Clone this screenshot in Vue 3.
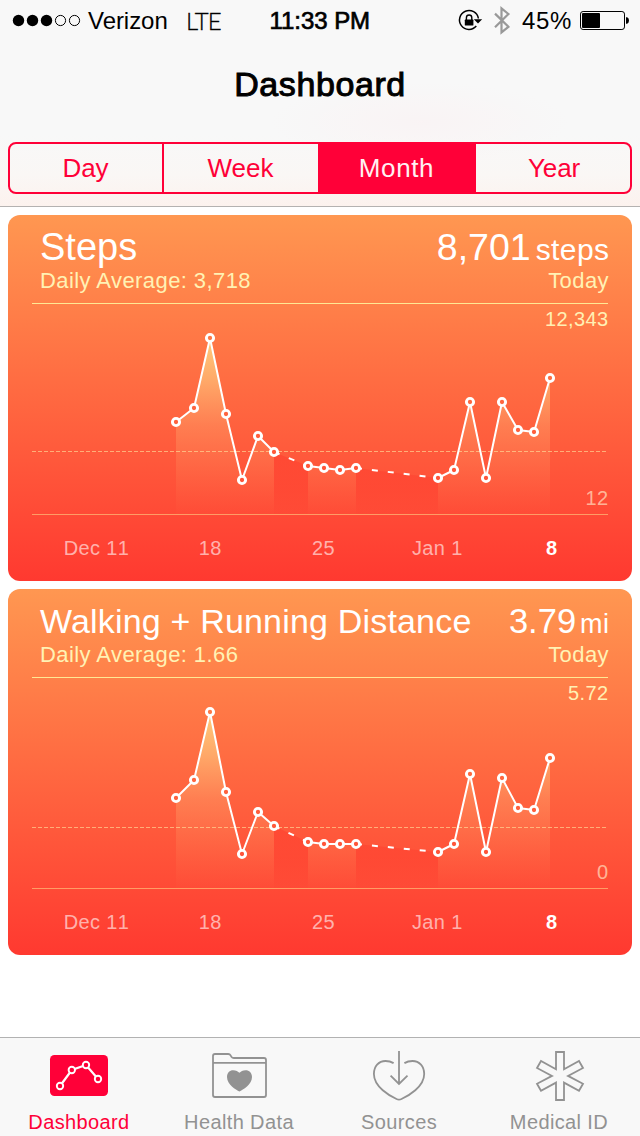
<script setup>
const xs = [176, 194, 210, 226, 242, 258, 274, 308, 324, 340, 356, 438, 454, 470, 486, 502, 518, 534, 550]
const runs = [[0, 6], [7, 10], [11, 18]]
const baseY = 514

function build(card) {
  const pts = card.ys.map((y, i) => ({ x: xs[i], y }))
  const seg = (a, b) => pts.slice(a, b + 1).map((p) => `${p.x},${p.y}`).join(' ')
  const area = (a, b) => `${pts[a].x},${baseY} ${seg(a, b)} ${pts[b].x},${baseY}`
  return {
    ...card,
    pts,
    lines: runs.map(([a, b]) => seg(a, b)),
    areas: runs.map(([a, b]) => area(a, b)),
    gapLines: [seg(6, 7), seg(10, 11)],
    gapAreas: [area(6, 7), area(10, 11)],
  }
}

const cards = [
  build({
    id: 'steps', title: 'Steps', value: '8,701', unit: 'steps', average: '3,718',
    max: '12,343', min: '12', averageY: 451.5,
    ys: [422, 408, 338, 414, 480, 436, 452, 466, 468, 470, 468, 478, 470, 402, 478, 402, 430, 432, 378],
  }),
  build({
    id: 'distance', title: 'Walking + Running Distance', value: '3.79', unit: 'mi', average: '1.66',
    max: '5.72', min: '0', averageY: 453.5,
    ys: [424, 406, 338, 418, 480, 438, 452, 468, 470, 470, 470, 478, 470, 400, 478, 404, 434, 436, 384],
  }),
]

const ticks = [
  { x: 96.5, label: 'Dec 11' },
  { x: 210.3, label: '18' },
  { x: 323.6, label: '25' },
  { x: 437.3, label: 'Jan 1' },
  { x: 551.7, label: '8', current: true },
]
const ranges = ['Day', 'Week', 'Month', 'Year']
</script>

<template>
  <div class="screen">
    <header class="top">
      <div class="status">
        <svg class="signal" width="88" height="40" viewBox="0 0 88 40">
          <circle v-for="n in 3" :key="n" :cx="4.5 + n * 14" cy="20.5" r="5.7" />
          <circle v-for="n in 2" :key="'o' + n" :cx="46.5 + n * 14" cy="20.5" r="5.1" fill="none" stroke="#000" stroke-width="1" />
        </svg>
        <span class="carrier">Verizon</span>
        <span class="network">LTE</span>
        <span class="clock">11:33 PM</span>
        <svg width="70" height="40" viewBox="452 0 70 40">
          <path d="M478.4 18.5A9.5 9.5 0 1 0 476.3 26.1" fill="none" stroke="#000" stroke-width="1.5" />
          <path d="M473.8 19.2h8.4l-4.2 4.4z" />
          <rect x="464.8" y="19.6" width="8.6" height="6" rx=".6" />
          <path d="M466.4 20v-2.3a2.7 2.7 0 0 1 5.4 0V20" fill="none" stroke="#000" stroke-width="1.4" />
          <path d="M495 13.6l13.4 13.2-6.9 5.6V8.4l6.9 5.6-13.4 13.2" fill="none" stroke="#999" stroke-width="2.2" />
        </svg>
        <span class="percent">45%</span>
        <svg width="62" height="40" viewBox="578 0 62 40">
          <rect x="580.5" y="11.5" width="44" height="18" rx="2.6" fill="none" stroke="#000" stroke-width="1" />
          <rect x="582" y="13" width="18" height="15" rx="1" />
          <path d="M626 17.3h1.2q1.8 1 1.8 3.2t-1.8 3.2H626z" />
        </svg>
      </div>
      <h1 class="title">Dashboard</h1>
      <nav class="segments">
        <button v-for="r in ranges" :key="r" class="segment" :class="[r.toLowerCase(), { active: r === 'Month' }]">{{ r }}</button>
      </nav>
    </header>

    <main class="cards">
      <section v-for="c in cards" :key="c.id" class="card" :class="c.id">
        <div class="card-head">
          <div class="row primary">
            <span class="name">{{ c.title }}</span>
            <span class="reading"><span class="value">{{ c.value }}</span><span class="unit">{{ c.unit }}</span></span>
          </div>
          <div class="row secondary">
            <span>Daily Average: {{ c.average }}</span>
            <span>Today</span>
          </div>
        </div>
        <svg class="chart" width="624" height="278" viewBox="8 303 624 278">
          <defs>
            <linearGradient :id="c.id + '-area'" gradientUnits="userSpaceOnUse" x1="0" y1="338" x2="0" y2="514">
              <stop offset="0" stop-color="#ffe08a" stop-opacity=".8" />
              <stop offset=".25" stop-color="#ffd283" stop-opacity=".58" />
              <stop offset=".5" stop-color="#ffb878" stop-opacity=".33" />
              <stop offset="1" stop-color="#ff9a60" stop-opacity=".02" />
            </linearGradient>
            <linearGradient :id="c.id + '-gap'" gradientUnits="userSpaceOnUse" x1="0" y1="450" x2="0" y2="514">
              <stop offset="0" stop-color="#ff3228" stop-opacity=".42" />
              <stop offset=".6" stop-color="#ff3228" stop-opacity=".25" />
              <stop offset="1" stop-color="#ff3228" stop-opacity="0" />
            </linearGradient>
            <linearGradient :id="c.id + '-dot'" gradientUnits="userSpaceOnUse" x1="0" y1="215" x2="0" y2="581">
              <stop offset="0" stop-color="#ff9751" />
              <stop offset="1" stop-color="#ff3930" />
            </linearGradient>
          </defs>
          <rect x="32" y="303" width="576" height="1" fill="#ffe894" />
          <polygon v-for="(p, i) in c.areas" :key="'a' + i" :points="p" :fill="`url(#${c.id}-area)`" />
          <polygon v-for="(p, i) in c.gapAreas" :key="'g' + i" :points="p" :fill="`url(#${c.id}-gap)`" />
          <line x1="32" x2="606" :y1="c.averageY" :y2="c.averageY" stroke="#ffe6a0" stroke-opacity=".6" stroke-dasharray="4 2" />
          <rect x="32" y="514" width="576" height="1" fill="#ffe08c" fill-opacity=".55" />
          <polyline v-for="(p, i) in c.gapLines" :key="'d' + i" :points="p" class="line dashed" />
          <polyline v-for="(p, i) in c.lines" :key="'l' + i" :points="p" class="line" />
          <circle v-for="p in c.pts" :key="p.x" :cx="p.x" :cy="p.y" r="3.6" :fill="`url(#${c.id}-dot)`" stroke="#fff" stroke-width="2.9" />
          <text x="608.4" y="326" class="bound max">{{ c.max }}</text>
          <text x="608.4" y="505" class="bound min">{{ c.min }}</text>
          <text v-for="t in ticks" :key="t.label" :x="t.x" y="555" class="tick" :class="{ current: t.current }">{{ t.label }}</text>
        </svg>
      </section>
    </main>

    <footer class="tabs">
      <a class="tab active">
        <svg width="64" height="56" viewBox="48 1046 64 56">
          <rect x="50" y="1055" width="58" height="41" rx="4.5" fill="#ff0038" />
          <path d="M60 1086L71.8 1070L86 1065L98 1079" fill="none" stroke="#fff" stroke-width="2.2" />
          <g fill="#ff0038" stroke="#fff" stroke-width="1.9">
            <circle cx="60" cy="1086" r="3.2" /><circle cx="71.8" cy="1070" r="3.2" />
            <circle cx="86" cy="1065" r="3.2" /><circle cx="98" cy="1079" r="3.2" />
          </g>
        </svg>
        <span>Dashboard</span>
      </a>
      <a class="tab">
        <svg width="64" height="56" viewBox="208 1046 64 56" fill="none" stroke="#929292" stroke-width="1.8">
          <path d="M213 1062.8V1056q0-2 2-2h13.2q1.6 0 2.4 1.4l.8 1.3q.9 1.3 2.5 1.3H264q2 0 2 2v35q0 2-2 2h-49q-2 0-2-2V1062.8H266" />
          <path d="M239.4 1091.4C236 1090 227 1084.5 227 1077C227 1072.8 229.7 1070.2 233.1 1070.2C236 1070.2 238.1 1071.6 239.4 1072.8C240.7 1071.6 242.8 1070.2 245.7 1070.2C249.1 1070.2 252 1072.8 252 1077C252 1084.5 242.8 1090 239.4 1091.4Z" fill="#929292" stroke="none" />
        </svg>
        <span>Health Data</span>
      </a>
      <a class="tab">
        <svg width="64" height="56" viewBox="368 1046 64 56" fill="none" stroke="#929292" stroke-width="1.8">
          <path d="M393.6 1063.1C390.5 1061.3 388 1061 385.5 1061C378.5 1061 373.9 1066.5 373.9 1074C373.9 1087 390 1096 396.5 1099Q399 1100.3 401.5 1099C408 1096 424.2 1087 424.2 1074C424.2 1066.5 419.5 1061 412.5 1061C410 1061 407.5 1061.3 404.4 1063.1" />
          <path d="M399 1051V1084M390.6 1075.6L399 1084L407.5 1075.6" />
        </svg>
        <span>Sources</span>
      </a>
      <a class="tab">
        <svg width="64" height="56" viewBox="528 1046 64 56" fill="none" stroke="#929292" stroke-width="1.8">
          <path d="M556 1052H564V1069.2L579 1061L583 1068L568 1075.9L583 1083.8L579 1090.8L564 1082.6V1100H556V1082.6L541 1090.8L537 1083.8L552 1075.9L537 1068L541 1061L556 1069.2Z" />
        </svg>
        <span>Medical ID</span>
      </a>
    </footer>
  </div>
</template>

<style>
body { background: #fff; }
</style>

<style scoped>
.screen {
  width: 640px;
  height: 1136px;
  display: flex;
  flex-direction: column;
  overflow: hidden;
  font-family: "Liberation Sans", Arial, Helvetica, sans-serif;
  color: #000;
}
svg { display: block; flex: none; }
.top {
  box-sizing: border-box;
  height: 207px;
  border-bottom: 1px solid #b4b2b1;
  background:
    radial-gradient(ellipse 150px 40px at 420px 122px, rgba(255, 228, 232, .22), rgba(255, 228, 232, 0)),
    linear-gradient(#f8f8f8 0, #f8f8f8 135px, #faf7f5 175px, #fcf2ee 206px);
}
.status {
  display: grid;
  grid-template-columns: 88px 98px 82px 184px 70px 56px 62px;
  height: 40px;
  line-height: 41px;
  font-size: 24px;
  white-space: nowrap;
}
.carrier { letter-spacing: -.05px; }
.network { font-family: Lato, "Liberation Sans", sans-serif; font-weight: 300; letter-spacing: -.9px; -webkit-text-stroke: .3px #000; }
.clock { -webkit-text-stroke: .7px #000; letter-spacing: -.05px; padding-left: 1.5px; }
.percent { letter-spacing: .6px; }
.title {
  margin: 24px 0 0;
  height: 40px;
  line-height: 40px;
  text-align: center;
  font-size: 34px;
  font-weight: 400;
  letter-spacing: .6px;
  -webkit-text-stroke: 1px #000;
}
.segments {
  display: grid;
  grid-template-columns: 154px 154px 158px 154px;
  box-sizing: border-box;
  height: 52px;
  margin: 38px 8px 0;
  border: 2px solid #ff0038;
  border-radius: 8px;
  overflow: hidden;
}
.segment {
  appearance: none;
  border: 0;
  padding: 0 1px 0 0;
  background: none;
  color: #ff0038;
  font: 26px/48px "Liberation Sans", Arial, sans-serif;
  letter-spacing: 0;
}
.segment.day { border-right: 2px solid #ff0038; }
.segment.month { letter-spacing: .6px; }
.segment.year { padding: 0 0 0 2px; letter-spacing: -.1px; }
.segment.active { background: #ff0038; color: #fff0f2; }
.cards {
  flex: 1;
  display: flex;
  flex-direction: column;
  gap: 8px;
  padding: 8px;
}
.card {
  height: 366px;
  flex: none;
  border-radius: 12px;
  overflow: hidden;
  background: linear-gradient(#ff9751, #ff3930);
}
.card-head { box-sizing: border-box; height: 88px; padding: 10px 23px 0 32px; color: #fff; }
.row { display: flex; justify-content: space-between; align-items: baseline; white-space: nowrap; }
.primary { height: 44px; line-height: 44px; margin-right: -.4px; }
.name { font-size: 38px; }
.value { font-size: 37.5px; }
.unit { font-size: 30px; letter-spacing: .4px; margin-left: 5px; }
.distance .name { font-size: 34px; letter-spacing: .18px; }
.distance .value { font-size: 34.5px; }
.distance .unit { font-size: 27px; margin-left: 4px; }
.secondary { height: 24px; line-height: 24px; font-size: 22px; letter-spacing: .42px; color: #fff2b4; }
.line { fill: none; stroke: #fff; stroke-width: 2; stroke-linejoin: round; }
.line.dashed { stroke-dasharray: 6 10; }
.bound, .tick { font-size: 20px; letter-spacing: .35px; font-kerning: none; }
.bound { text-anchor: end; }
.max { fill: #fff0b4; }
.min { fill: #fff0d0; fill-opacity: .65; }
.tick { text-anchor: middle; fill: #fff; fill-opacity: .6; }
.tick.current { font-weight: 700; fill-opacity: 1; }
.tabs {
  box-sizing: border-box;
  height: 99px;
  flex: none;
  display: grid;
  grid-template-columns: repeat(4, 160px);
  border-top: 1px solid #b2b2b2;
  background: #f8f8f8;
}
.tab {
  display: flex;
  flex-direction: column;
  align-items: center;
  padding-top: 8px;
  color: #929292;
  font-size: 20px;
  line-height: 24px;
  letter-spacing: .38px;
}
.tab span { margin: 8px 2px 0 0; }
.tab.active { color: #ff0038; }
</style>
